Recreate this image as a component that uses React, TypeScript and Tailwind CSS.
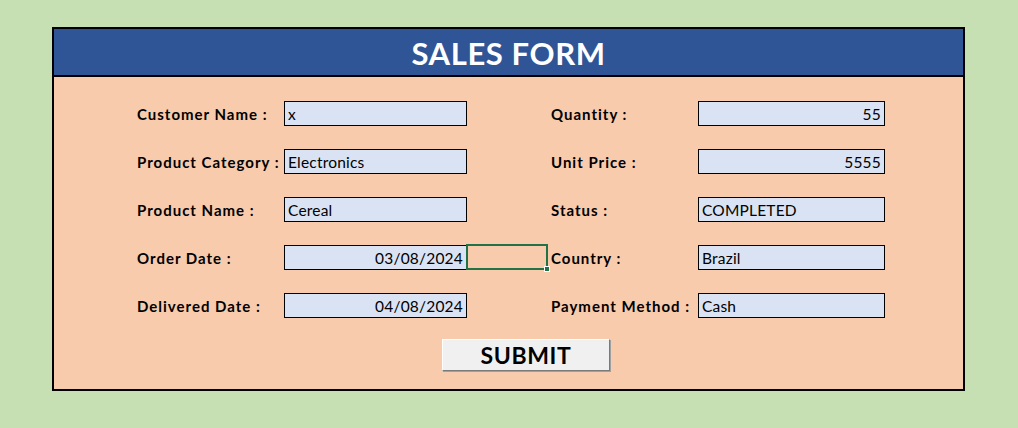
const left = [
  { label: 'Customer Name :', value: 'x', right: false },
  { label: 'Product Category :', value: 'Electronics', right: false },
  { label: 'Product Name :', value: 'Cereal', right: false },
  { label: 'Order Date :', value: '03/08/2024', right: true },
  { label: 'Delivered Date :', value: '04/08/2024', right: true },
];

const rightCol = [
  { label: 'Quantity :', value: '55', right: true },
  { label: 'Unit Price :', value: '5555', right: true },
  { label: 'Status :', value: 'COMPLETED', right: false },
  { label: 'Country :', value: 'Brazil', right: false },
  { label: 'Payment Method :', value: 'Cash', right: false },
];

function Cell({ value, right, w }: { value: string; right: boolean; w: string }) {
  return (
    <div
      className={`${w} h-[25px] border border-black bg-[#dae3f3] text-[15.5px] leading-[24px] text-black px-[3px] tracking-[0.2px] ${
        right ? 'text-right' : 'text-left'
      }`}
    >
      {value}
    </div>
  );
}

function Label({ text }: { text: string }) {
  return (
    <div className="h-[25px] flex items-center pt-[1px] text-[15px] font-bold text-black tracking-[1px] whitespace-nowrap">
      {text}
    </div>
  );
}

export default function App() {
  return (
    <div className="w-[1018px] h-[428px] bg-[#c6e0b4] pt-[27px] pl-[52px]" style={{ fontFamily: 'Lato, "Open Sans", sans-serif' }}>
      <div className="w-[913px] h-[364px] border-2 border-black bg-[#f8cbad] flex flex-col">
        <div className="h-[48px] bg-[#2f5597] border-b-2 border-black flex items-center justify-center">
          <span className="text-white font-bold text-[31px] leading-none tracking-[0.6px] mt-[2px]">SALES FORM</span>
        </div>
        <div className="pt-[24px] pl-[83px] flex flex-col">
          <div className="grid grid-cols-[147px_183px_84px_147px_187px] gap-y-[23px]">
            {left.map((row, i) => (
              <div key={row.label} className="contents">
                <Label text={row.label} />
                <Cell value={row.value} right={row.right} w="w-[183px]" />
                <div className="h-[25px]">
                  {i === 3 && (
                    <div className="relative -mt-px -ml-px w-[82px] h-[26px] border-2 border-[#217346]">
                      <div className="absolute -right-[4px] -bottom-[4px] w-[6px] h-[6px] bg-[#217346] border border-white" />
                    </div>
                  )}
                </div>
                <Label text={rightCol[i].label} />
                <Cell value={rightCol[i].value} right={rightCol[i].right} w="w-[187px]" />
              </div>
            ))}
          </div>
          <div className="mt-[21px] ml-[305px] w-[168px] h-[32px] bg-[#f0f0f0] border border-t-white border-l-white border-r-[#7a7a7a] border-b-[#7a7a7a] shadow-[1px_1px_0_#a0a0a0] flex items-center justify-center">
            <span className="text-[23px] font-bold text-black leading-none tracking-[0.6px]">SUBMIT</span>
          </div>
        </div>
      </div>
    </div>
  );
}
